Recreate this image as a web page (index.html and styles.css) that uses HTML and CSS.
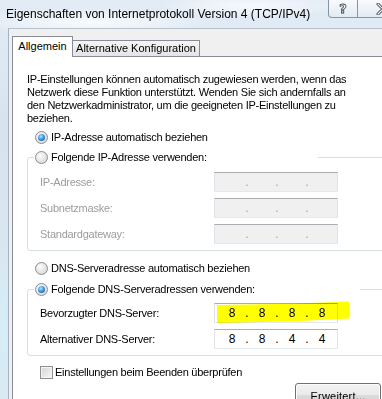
FILE: index.html
```html
<!DOCTYPE html>
<html lang="de">
<head>
  <meta charset="UTF-8">
  <meta name="viewport" content="width=device-width, initial-scale=1.0">
  <title>Eigenschaften von Internetprotokoll Version 4 (TCP/IPv4)</title>
  <link rel="stylesheet" href="styles.css">
</head>
<body>

  <div class="window">
    <!-- Titelleiste -->
    <div class="titlebar">
      <span class="title">Eigenschaften von Internetprotokoll Version 4 (TCP/IPv4)</span>
      <div class="caption-buttons">
        <span class="cap-btn help">?</span>
        <span class="cap-btn close">
          <svg width="14" height="12" viewBox="0 0 14 12">
            <path d="M2 1 L12 11 M12 1 L2 11" stroke="#3d4650" stroke-width="3" stroke-linecap="round"/>
            <path d="M2 1 L12 11 M12 1 L2 11" stroke="#f4f7fa" stroke-width="1.2" stroke-linecap="round"/>
          </svg>
        </span>
      </div>
    </div>

    <div class="client">
      <!-- Registerkarten -->
      <div class="tabs">
        <div class="tab active">Allgemein</div>
        <div class="tab">Alternative Konfiguration</div>
      </div>

      <div class="panel">
        <p class="intro">IP-Einstellungen können automatisch zugewiesen werden, wenn das<br>Netzwerk diese Funktion unterstützt. Wenden Sie sich andernfalls an<br>den Netzwerkadministrator, um die geeigneten IP-Einstellungen zu<br>beziehen.</p>

        <div class="option"><span class="radio checked"></span>IP-Adresse automatisch beziehen</div>

        <!-- IP-Adresse -->
        <fieldset class="group">
          <legend class="option legend-ip"><span class="radio"></span>Folgende IP-Adresse verwenden:</legend>
          <div class="field disabled">
            <span class="field-label">IP-Adresse:</span>
            <span class="ipbox"><span class="oct"></span><span class="dot">.</span><span class="oct"></span><span class="dot">.</span><span class="oct"></span><span class="dot">.</span><span class="oct"></span></span>
          </div>
          <div class="field disabled">
            <span class="field-label">Subnetzmaske:</span>
            <span class="ipbox"><span class="oct"></span><span class="dot">.</span><span class="oct"></span><span class="dot">.</span><span class="oct"></span><span class="dot">.</span><span class="oct"></span></span>
          </div>
          <div class="field disabled">
            <span class="field-label">Standardgateway:</span>
            <span class="ipbox"><span class="oct"></span><span class="dot">.</span><span class="oct"></span><span class="dot">.</span><span class="oct"></span><span class="dot">.</span><span class="oct"></span></span>
          </div>
        </fieldset>

        <div class="option option-dns"><span class="radio"></span>DNS-Serveradresse automatisch beziehen</div>

        <!-- DNS-Server -->
        <fieldset class="group group-dns">
          <legend class="option legend-dns"><span class="radio checked"></span>Folgende DNS-Serveradressen verwenden:</legend>
          <div class="field">
            <span class="field-label">Bevorzugter DNS-Server:</span>
            <span class="ipbox"><span class="marker"></span><span class="oct">8</span><span class="dot">.</span><span class="oct">8</span><span class="dot">.</span><span class="oct">8</span><span class="dot">.</span><span class="oct">8</span></span>
          </div>
          <div class="field">
            <span class="field-label">Alternativer DNS-Server:</span>
            <span class="ipbox"><span class="oct">8</span><span class="dot">.</span><span class="oct">8</span><span class="dot">.</span><span class="oct">4</span><span class="dot">.</span><span class="oct">4</span></span>
          </div>
        </fieldset>

        <div class="check-row"><span class="checkbox"></span>Einstellungen beim Beenden überprüfen</div>

        <div class="button-row">
          <button class="btn">Erweitert...</button>
        </div>
      </div>
    </div>
  </div>

</body>
</html>
```

FILE: styles.css
```css
body {
  margin: 0;
  padding: 0;
  width: 382px;
  height: 399px;
  overflow: hidden;
  font-family: "Liberation Sans", Arial, sans-serif;
  font-size: 12px;
  color: #000;
  background:
    radial-gradient(ellipse 120px 14px at 90px 22px, rgba(255, 255, 255, 0.8), rgba(255, 255, 255, 0)),
    radial-gradient(ellipse 90px 12px at 250px 6px, rgba(255, 255, 255, 0.7), rgba(255, 255, 255, 0)),
    radial-gradient(ellipse 8px 80px at 3px 330px, rgba(210, 240, 250, 0.9), rgba(210, 240, 250, 0)),
    linear-gradient(180deg, #e3ecf5 0%, #d7e4f0 30%, #dbe9f1 100%);
}
.window {
  display: flex;
  flex-direction: column;
  height: 399px;
}
.titlebar {
  display: flex;
  height: 28px;
  flex-shrink: 0;
}
.title {
  padding: 8px 0 0 6px;
  line-height: 13px;
  white-space: nowrap;
}
.caption-buttons {
  display: flex;
  margin-left: auto;
  margin-right: -19px;
  height: 18px;
}
.cap-btn {
  display: flex;
  align-items: center;
  justify-content: center;
  box-sizing: border-box;
  height: 18px;
  border: 1px solid #8794a3;
  border-top: none;
  background: linear-gradient(180deg, rgba(255, 255, 255, 0.75), rgba(226, 234, 243, 0.55));
}
.help {
  width: 30px;
  border-bottom-left-radius: 4px;
  font-family: "DejaVu Sans", sans-serif;
  font-weight: bold;
  font-size: 13px;
  color: #f6f8fa;
  -webkit-text-stroke: 0.8px #3d4650;
}
.close {
  width: 43px;
  padding-left: 8px;
  border-left: none;
}
.client {
  flex: 1;
  margin-left: 8px;
  padding-left: 3px;
  border-left: 1px solid #a9b4c0;
  border-top: 1px solid #b7c2cd;
  background: #f0f0f0;
  font-size: 11px;
}
.tabs {
  display: flex;
  align-items: flex-end;
  padding-top: 7px;
}
.tab {
  box-sizing: border-box;
  height: 16px;
  width: 127px;
  line-height: 15px;
  text-align: center;
  border: 1px solid #898c95;
  border-bottom: none;
  border-left: none;
  background: linear-gradient(180deg, #f5f5f5, #e4e4e4);
  white-space: nowrap;
}
.tab.active {
  position: relative;
  z-index: 1;
  width: 61px;
  height: 21px;
  line-height: 19px;
  margin-bottom: -1px;
  border-left: 1px solid #898c95;
  background: #fff;
}
.panel {
  width: 380px;
  border: 1px solid #898c95;
  border-right: none;
  background: #fff;
  padding: 16px 0 40px 14px;
  letter-spacing: -0.25px;
}
.intro {
  margin: 0 0 4px;
  line-height: 13px;
  white-space: nowrap;
}
.option {
  display: flex;
  align-items: center;
  height: 16px;
  padding-left: 8px;
  white-space: nowrap;
}
.radio {
  position: relative;
  box-sizing: border-box;
  width: 13px;
  height: 13px;
  margin-right: 3px;
  flex-shrink: 0;
  border-radius: 50%;
  border: 1px solid #8a8d91;
  background: radial-gradient(circle at 38% 35%, #fdfdfd 0%, #e8e8e8 45%, #cfd0d2 100%);
}
.radio.checked::after {
  content: "";
  position: absolute;
  left: 2px;
  top: 2px;
  width: 7px;
  height: 7px;
  border-radius: 50%;
  background: radial-gradient(circle at 40% 35%, #b9e6ff 0%, #3f9ae0 45%, #0e4b91 100%);
}
.group {
  margin: 4px 0 0;
  padding: 4px 0 3px;
  border: 1px solid #d5dfe5;
  border-radius: 3px;
}
.group-dns {
  margin-top: 5px;
  padding-top: 3px;
}
.legend-ip,
.legend-dns {
  box-sizing: border-box;
  margin-left: 6px;
  padding: 0 0 0 1px;
}
.legend-ip {
  width: 284px;
}
.legend-dns {
  width: 326px;
}
.option-dns {
  margin-top: 9px;
}
.field {
  display: flex;
  align-items: center;
  height: 26px;
  padding-left: 12px;
}
.field-label {
  width: 174px;
  white-space: nowrap;
}
.disabled .field-label {
  color: #9c9c9c;
}
.ipbox {
  position: relative;
  display: flex;
  box-sizing: border-box;
  width: 124px;
  height: 20px;
  padding-left: 5px;
  line-height: 18px;
  letter-spacing: 0;
  font-size: 12px;
  border: 1px solid #e2e3ea;
  border-top-color: #abadb3;
  border-bottom-color: #e3e9ef;
  background: #fff;
}
.disabled .ipbox {
  background: #f0f0f0;
  color: #a8a8a8;
}
.oct {
  width: 24px;
  text-align: center;
}
.dot {
  width: 6px;
  text-align: center;
}
/* gelber Textmarker über dem ersten DNS-Feld */
.marker {
  position: absolute;
  left: 2px;
  top: -3px;
  width: 132px;
  height: 22px;
  background: #ffff00;
  mix-blend-mode: multiply;
  clip-path: polygon(0 18%, 55% 12%, 100% 2%, 100% 80%, 60% 92%, 0 100%);
}
.check-row {
  display: flex;
  align-items: center;
  height: 16px;
  margin-top: 8px;
  padding-left: 13px;
  white-space: nowrap;
}
.checkbox {
  box-sizing: border-box;
  width: 13px;
  height: 13px;
  margin-right: 2px;
  border: 1px solid #8e8f8f;
  box-shadow: inset 0 0 0 1px #f4f4f4;
  background: linear-gradient(135deg, #d3d4d6, #f7f7f7);
}
.button-row {
  display: flex;
  justify-content: flex-end;
  margin-top: 3px;
  padding-right: 26px;
}
.btn {
  box-sizing: border-box;
  width: 86px;
  height: 23px;
  padding: 2px 0 0;
  font-family: "Liberation Sans", Arial, sans-serif;
  font-size: 11px;
  letter-spacing: 0.2px;
  color: #000;
  border: 1px solid #707070;
  border-radius: 3px;
  box-shadow: inset 0 0 0 1px #fcfcfc;
  background: linear-gradient(180deg, #f2f2f2 0%, #ebebeb 50%, #dddddd 50%, #cfcfcf 100%);
}
```
